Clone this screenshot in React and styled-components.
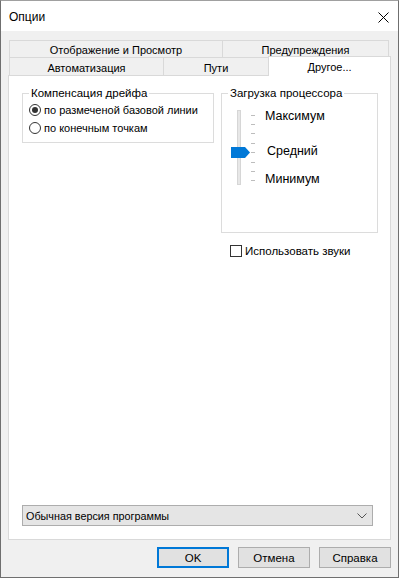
import React from 'react'
import styled, { createGlobalStyle } from 'styled-components'

const GlobalStyle = createGlobalStyle`
  html, body {
    margin: 0;
    padding: 0;
    background: #ffffff;
  }
  * {
    box-sizing: border-box;
  }
`

const Window = styled.div`
  width: 399px;
  height: 578px;
  display: flex;
  flex-direction: column;
  border: 1px solid #6f6f6f;
  border-top-color: #a0a0a0;
  font-family: "Liberation Sans", Arial, sans-serif;
  font-size: 11px;
  color: #000;
  white-space: nowrap;
`

const TitleBar = styled.div`
  height: 30px;
  background: #fff;
  display: flex;
  align-items: center;
  justify-content: space-between;
  padding: 0 9px 0 8px;
`

const Title = styled.span`
  font-size: 12px;
  margin-top: 1px;
`

const CloseIcon = styled.svg`
  width: 11px;
  height: 11px;
  margin-top: 2px;
`

const Body = styled.div`
  flex: 1;
  display: flex;
  flex-direction: column;
  background: #f0f0f0;
  padding: 9px 7px 9px 7px;
`

const TabRow = styled.div`
  display: flex;
  padding-left: 1px;
`

const Tab = styled.div`
  width: ${p => p.$w}px;
  height: ${p => (p.$active ? 20 : p.$h)}px;
  margin-left: -1px;
  margin-top: ${p => (p.$active ? -1 : 0)}px;
  margin-bottom: ${p => (p.$active ? -1 : 0)}px;
  display: flex;
  align-items: center;
  justify-content: center;
  padding-top: ${p => (p.$active ? 0 : 2)}px;
  background: ${p => (p.$active ? '#fff' : '#f0f0f0')};
  border: 1px solid #d9d9d9;
  border-bottom: none;
  position: relative;
  z-index: ${p => (p.$active ? 1 : 0)};
  &:first-child {
    margin-left: 0;
  }
`

const Panel = styled.div`
  flex: 1;
  display: flex;
  flex-direction: column;
  background: #fff;
  border: 1px solid #d9d9d9;
`

const TopRow = styled.div`
  display: flex;
  align-items: flex-start;
  gap: 7px;
  padding: 10px 12px 0 13px;
`

const Group = styled.fieldset`
  width: ${p => p.$w}px;
  margin: 0;
  padding: ${p => p.$pad};
  border: 1px solid #dcdcdc;
  min-inline-size: 0;
`

const Legend = styled.legend`
  padding: 0 2px;
  line-height: 14px;
  font-size: 11.5px;
`

const OptionRow = styled.label`
  display: flex;
  align-items: center;
  gap: 3px;
  height: 18px;
  font-size: 11px;
`

const Radio = styled.span`
  flex: none;
  width: 12px;
  height: 12px;
  border-radius: 50%;
  border: 1px solid #333;
  background: #fff;
  display: flex;
  align-items: center;
  justify-content: center;
  &::after {
    content: '';
    width: 6px;
    height: 6px;
    border-radius: 50%;
    background: ${p => (p.$checked ? '#333' : 'transparent')};
  }
`

const RightColumn = styled.div`
  display: flex;
  flex-direction: column;
`

const SliderArea = styled.div`
  height: 126px;
  display: flex;
  align-items: flex-start;
  gap: 3px;
`

const SliderLabels = styled.div`
  display: flex;
  flex-direction: column;
`

const SliderLabel = styled.span`
  line-height: 14px;
  font-size: 12.5px;
  margin-top: ${p => p.$top}px;
  padding-left: ${p => p.$indent || 0}px;
`

const CheckRow = styled.label`
  display: flex;
  align-items: center;
  gap: 3px;
  height: 16px;
  margin: 10px 0 0 9px;
  font-size: 11.5px;
`

const CheckBox = styled.span`
  flex: none;
  width: 12px;
  height: 12px;
  border: 1px solid #333;
  background: #fff;
`

const Spacer = styled.div`
  flex: 1;
`

const Select = styled.div`
  height: 21px;
  margin: 0 17px 13px 13px;
  display: flex;
  align-items: center;
  justify-content: space-between;
  padding: 0 5px 0 3px;
  background: #e5e5e5;
  border: 1px solid #adadad;
  font-size: 10.8px;
`

const Chevron = styled.svg`
  width: 10px;
  height: 6px;
`

const ButtonRow = styled.div`
  display: flex;
  justify-content: flex-end;
  gap: 9px;
  margin-top: 7px;
`

const Button = styled.button`
  width: 72px;
  height: 21px;
  padding: 0;
  font-family: inherit;
  font-size: 11.5px;
  color: #000;
  background: #e1e1e1;
  border: ${p => (p.$default ? '2px solid #0078d7' : '1px solid #adadad')};
`

const ticks = [9, 18, 27, 37, 46, 56, 65, 74]

const Slider = () => (
  <svg width="34" height="84" viewBox="0 0 34 84">
    <rect x="9.5" y="4.5" width="3" height="74" fill="#e7e7e7" stroke="#d6d6d6" />
    {ticks.map(y => (
      <line key={y} x1="23" x2="27" y1={y + 0.5} y2={y + 0.5} stroke="#bdbdbd" />
    ))}
    <polygon points="3,41 17,41 22,46.5 17,52 3,52" fill="#0078d7" />
  </svg>
)

const App = () => {
  return (
    <>
      <GlobalStyle />
      <Window>
        <TitleBar>
          <Title>Опции</Title>
          <CloseIcon viewBox="0 0 11 11">
            <path d="M0.5 0.5 L10.5 10.5 M10.5 0.5 L0.5 10.5" stroke="#000" strokeWidth="1" fill="none" />
          </CloseIcon>
        </TitleBar>
        <Body>
          <TabRow>
            <Tab $w={214} $h={17}>Отображение и Просмотр</Tab>
            <Tab $w={167} $h={17}>Предупреждения</Tab>
          </TabRow>
          <TabRow>
            <Tab $w={155} $h={18}>Автоматизация</Tab>
            <Tab $w={106} $h={18}>Пути</Tab>
            <Tab $w={123} $active>Другое...</Tab>
          </TabRow>
          <Panel>
            <TopRow>
              <Group $w={192} $pad="1px 6px 5px 6px">
                <Legend>Компенсация дрейфа</Legend>
                <OptionRow>
                  <Radio $checked />
                  по размеченой базовой линии
                </OptionRow>
                <OptionRow>
                  <Radio />
                  по конечным точкам
                </OptionRow>
              </Group>
              <RightColumn>
                <Group $w={157} $pad="6px 6px 0 6px">
                  <Legend>Загрузка процессора</Legend>
                  <SliderArea>
                    <Slider />
                    <SliderLabels>
                      <SliderLabel $top={3}>Максимум</SliderLabel>
                      <SliderLabel $top={21} $indent={2}>Средний</SliderLabel>
                      <SliderLabel $top={14}>Минимум</SliderLabel>
                    </SliderLabels>
                  </SliderArea>
                </Group>
                <CheckRow>
                  <CheckBox />
                  Использовать звуки
                </CheckRow>
              </RightColumn>
            </TopRow>
            <Spacer />
            <Select>
              <span>Обычная версия программы</span>
              <Chevron viewBox="0 0 10 6">
                <path d="M0.5 0.5 L5 5 L9.5 0.5" stroke="#555" fill="none" />
              </Chevron>
            </Select>
          </Panel>
          <ButtonRow>
            <Button $default>OK</Button>
            <Button>Отмена</Button>
            <Button>Справка</Button>
          </ButtonRow>
        </Body>
      </Window>
    </>
  )
}

export default App
